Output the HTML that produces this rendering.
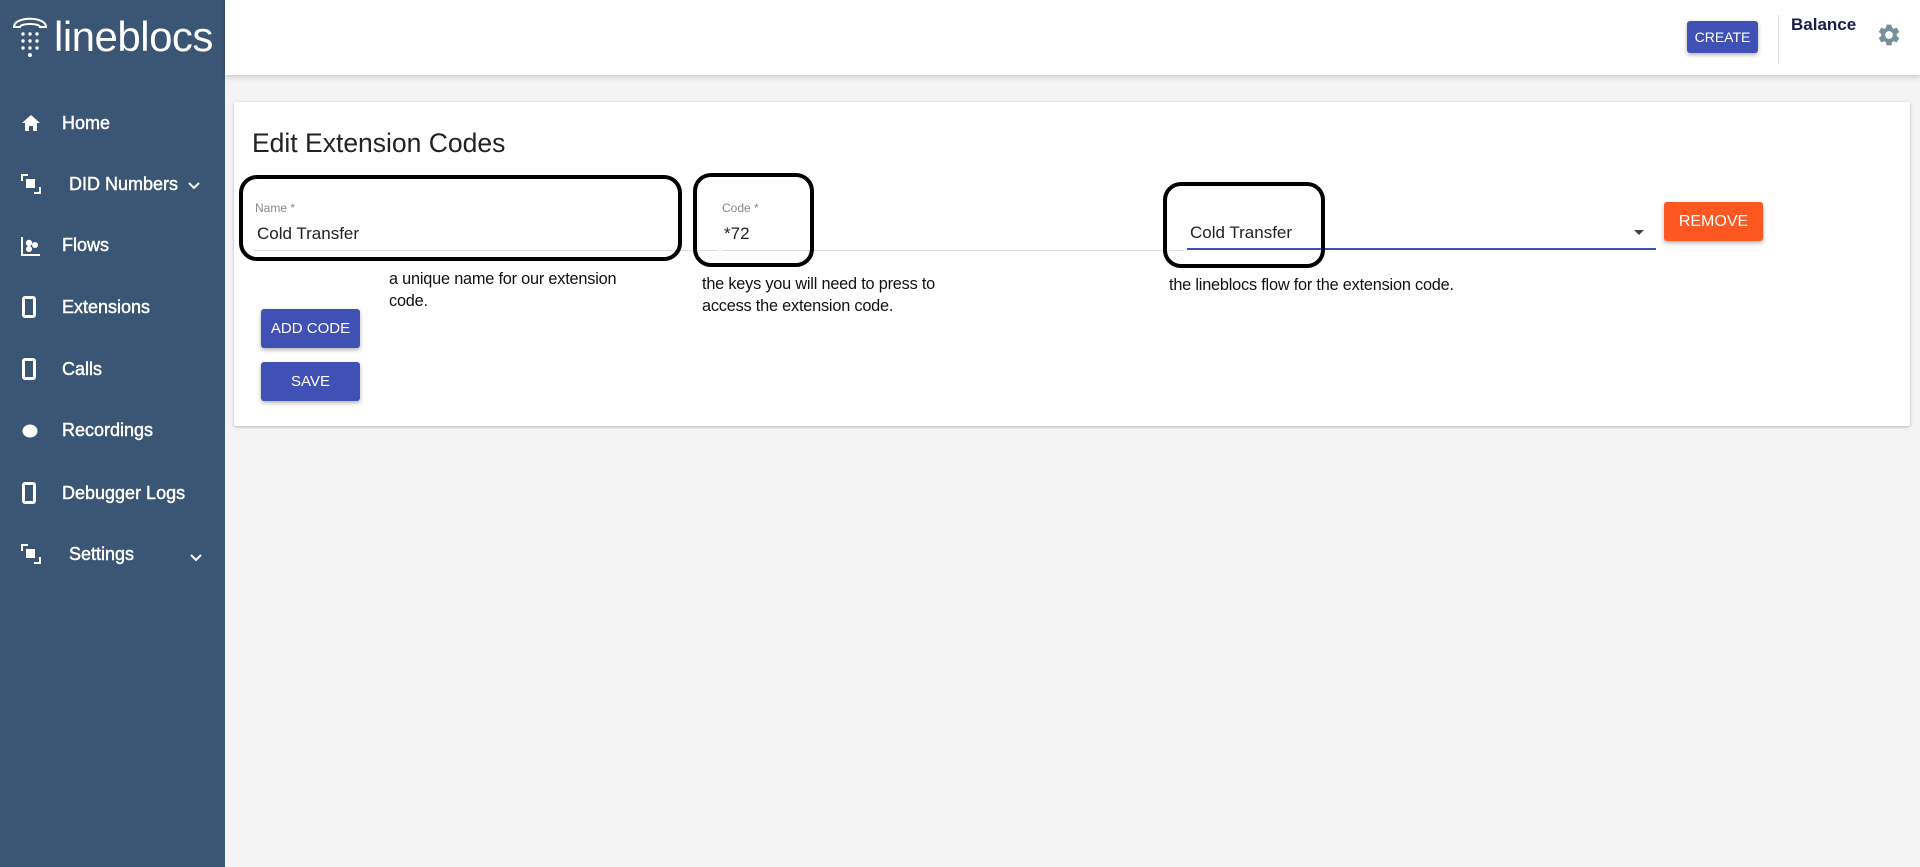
<!DOCTYPE html>
<html><head><meta charset="utf-8"><style>
*{margin:0;padding:0;box-sizing:border-box}
body{width:1920px;height:867px;background:#f4f4f4;font-family:"Liberation Sans",sans-serif;position:relative;overflow:hidden}
.a{position:absolute}
#side{left:0;top:0;width:225px;height:867px;background:#3b5574}
.nav{position:absolute;left:62px;color:#fff;font-size:18px;-webkit-text-stroke:0.45px #fff}
.ic{position:absolute;left:21px}
#head{left:225px;top:0;width:1695px;height:75px;background:#fff;box-shadow:0 2px 5px rgba(0,0,0,.18)}
.btn{position:absolute;color:#fff;font-size:15px;text-align:center;border-radius:3px;box-shadow:0 2px 4px rgba(0,0,0,.3)}
.box{position:absolute;border:4px solid #000;border-radius:18px}
.help{position:absolute;font-size:16.3px;color:#111;line-height:22px;letter-spacing:-0.2px}
.lbl{position:absolute;font-size:12px;color:#888}
.val{position:absolute;font-size:17px;color:#222}
</style></head><body>
<div id="side" class="a">
 <svg class="a" style="left:10px;top:14px" width="40" height="46" viewBox="0 0 40 46" fill="none" stroke="#fff" stroke-width="2">
  <path d="M4 13 C4 2 36 2 36 13 L30 13 C30 9 10 9 10 13 Z"/>
  <g fill="#fff" stroke="none"><circle cx="13" cy="20" r="1.7"/><circle cx="20" cy="20" r="1.7"/><circle cx="27" cy="20" r="1.7"/><circle cx="13" cy="27" r="1.7"/><circle cx="20" cy="27" r="1.7"/><circle cx="27" cy="27" r="1.7"/><circle cx="13" cy="34" r="1.7"/><circle cx="20" cy="34" r="1.7"/><circle cx="27" cy="34" r="1.7"/><circle cx="20" cy="41" r="2"/></g>
 </svg>
 <div class="a" style="left:54px;top:13px;color:#fff;font-size:42px;letter-spacing:-0.5px">lineblocs</div>

 <svg class="ic" style="top:114px" width="20" height="18" viewBox="0 0 20 18"><path d="M10 1 L1 9 H4 V17 H8 V12 H12 V17 H16 V9 H19 Z" fill="#fff"/></svg>
 <div class="nav" style="top:113px">Home</div>

 <svg class="ic" style="top:174px" width="20" height="20" viewBox="0 0 20 20" fill="none" stroke="#fff" stroke-width="2"><path d="M1 7V1H7"/><rect x="6" y="6" width="7" height="7" fill="#fff"/><path d="M19 13V19H13"/></svg>
 <div class="nav" style="top:174px;left:69px">DID Numbers</div>
 <svg class="a" style="left:188px;top:182px" width="12" height="8" viewBox="0 0 12 8"><path d="M1 1L6 6L11 1" stroke="#fff" stroke-width="2" fill="none"/></svg>

 <svg class="ic" style="top:236px" width="20" height="20" viewBox="0 0 20 20"><path d="M1 1V19H19" stroke="#fff" stroke-width="2" fill="none"/><circle cx="8" cy="7" r="3.2" fill="#fff"/><circle cx="14" cy="9" r="3" fill="#fff"/><circle cx="8" cy="13" r="3" fill="#fff"/></svg>
 <div class="nav" style="top:235px">Flows</div>

 <svg class="ic" style="top:296px;left:22px" width="14" height="22" viewBox="0 0 14 22"><rect x="1.5" y="1.5" width="11" height="19" rx="1.5" stroke="#fff" stroke-width="3" fill="none"/></svg>
 <div class="nav" style="top:297px">Extensions</div>

 <svg class="ic" style="top:358px;left:22px" width="14" height="22" viewBox="0 0 14 22"><rect x="1.5" y="1.5" width="11" height="19" rx="1.5" stroke="#fff" stroke-width="3" fill="none"/></svg>
 <div class="nav" style="top:359px">Calls</div>

 <svg class="ic" style="top:424px;left:22px" width="16" height="14" viewBox="0 0 16 14"><ellipse cx="8" cy="7" rx="7.5" ry="6.5" fill="#fff"/></svg>
 <div class="nav" style="top:420px">Recordings</div>

 <svg class="ic" style="top:482px;left:22px" width="14" height="22" viewBox="0 0 14 22"><rect x="1.5" y="1.5" width="11" height="19" rx="1.5" stroke="#fff" stroke-width="3" fill="none"/></svg>
 <div class="nav" style="top:483px">Debugger Logs</div>

 <svg class="ic" style="top:544px" width="20" height="20" viewBox="0 0 20 20" fill="none" stroke="#fff" stroke-width="2"><path d="M1 7V1H7"/><rect x="6" y="6" width="7" height="7" fill="#fff"/><path d="M19 13V19H13"/></svg>
 <div class="nav" style="top:544px;left:69px">Settings</div>
 <svg class="a" style="left:190px;top:554px" width="12" height="8" viewBox="0 0 12 8"><path d="M1 1L6 6L11 1" stroke="#fff" stroke-width="2" fill="none"/></svg>
</div>

<div id="head" class="a"></div>
<div class="btn" style="left:1687px;top:21px;width:71px;height:32px;line-height:32px;background:#3f51b5;font-size:14px">CREATE</div>
<div class="a" style="left:1778px;top:15px;width:1px;height:49px;background:#ddd"></div>
<div class="a" style="left:1791px;top:15px;font-size:17px;font-weight:bold;color:#1b1b4b">Balance</div>
<svg class="a" style="left:1876px;top:22px" width="26" height="26" viewBox="0 0 24 24"><path fill="#78909c" d="M19.14 12.94c.04-.3.06-.61.06-.94s-.02-.64-.07-.94l2.03-1.58a.49.49 0 0 0 .12-.61l-1.920-3.32a.49.49 0 0 0-.59-.22l-2.39.96c-.5-.38-1.03-.7-1.62-.94l-.36-2.54a.48.48 0 0 0-.48-.41h-3.840a.48.48 0 0 0-.47.41l-.36 2.54c-.59.24-1.13.57-1.62.94l-2.39-.96a.48.48 0 0 0-.59.22L2.74 8.87a.47.47 0 0 0 .12.61l2.03 1.58c-.05.3-.09.63-.09.94s.02.64.07.94l-2.03 1.58a.49.49 0 0 0-.12.61l1.92 3.32c.12.22.37.29.59.22l2.39-.96c.5.38 1.03.7 1.62.94l.36 2.54c.05.24.24.41.48.41h3.84c.24 0 .44-.17.47-.41l.36-2.54c.59-.24 1.13-.56 1.62-.94l2.39.96c.22.08.47 0 .59-.22l1.92-3.32a.47.47 0 0 0-.12-.61l-2.01-1.58zM12 15.6A3.6 3.6 0 1 1 12 8.4a3.6 3.6 0 0 1 0 7.2z"/></svg>

<div class="a" style="left:234px;top:102px;width:1676px;height:324px;background:#fff;box-shadow:0 1px 3px rgba(0,0,0,.25);border-radius:2px"></div>
<div class="a" style="left:252px;top:128px;font-size:26.5px;color:#222">Edit Extension Codes</div>

<div class="lbl" style="left:255px;top:201px">Name *</div>
<div class="val" style="left:257px;top:224px">Cold Transfer</div>
<div class="a" style="left:254px;top:250px;width:464px;height:1px;background:#ddd"></div>

<div class="lbl" style="left:722px;top:201px">Code *</div>
<div class="val" style="left:724px;top:224px">*72</div>
<div class="a" style="left:722px;top:250px;width:462px;height:1px;background:#ddd"></div>

<div class="val" style="left:1190px;top:223px">Cold Transfer</div>
<svg class="a" style="left:1634px;top:230px" width="10" height="6" viewBox="0 0 10 6"><path d="M0 0H10L5 5Z" fill="#444"/></svg>
<div class="a" style="left:1187px;top:248px;width:469px;height:2px;background:#3f51b5"></div>

<div class="btn" style="left:1664px;top:202px;width:99px;height:39px;line-height:39px;background:#ff5722;font-size:16px">REMOVE</div>

<div class="box" style="left:239px;top:175px;width:443px;height:86px"></div>
<div class="box" style="left:693px;top:173px;width:121px;height:94px"></div>
<div class="box" style="left:1163px;top:182px;width:162px;height:86px"></div>

<div class="help" style="left:389px;top:268px">a unique name for our extension<br>code.</div>
<div class="help" style="left:702px;top:273px">the keys you will need to press to<br>access the extension code.</div>
<div class="help" style="left:1169px;top:274px">the lineblocs flow for the extension code.</div>

<div class="btn" style="left:261px;top:309px;width:99px;height:39px;line-height:39px;background:#3f51b5">ADD CODE</div>
<div class="btn" style="left:261px;top:362px;width:99px;height:39px;line-height:39px;background:#3f51b5">SAVE</div>
</body></html>
